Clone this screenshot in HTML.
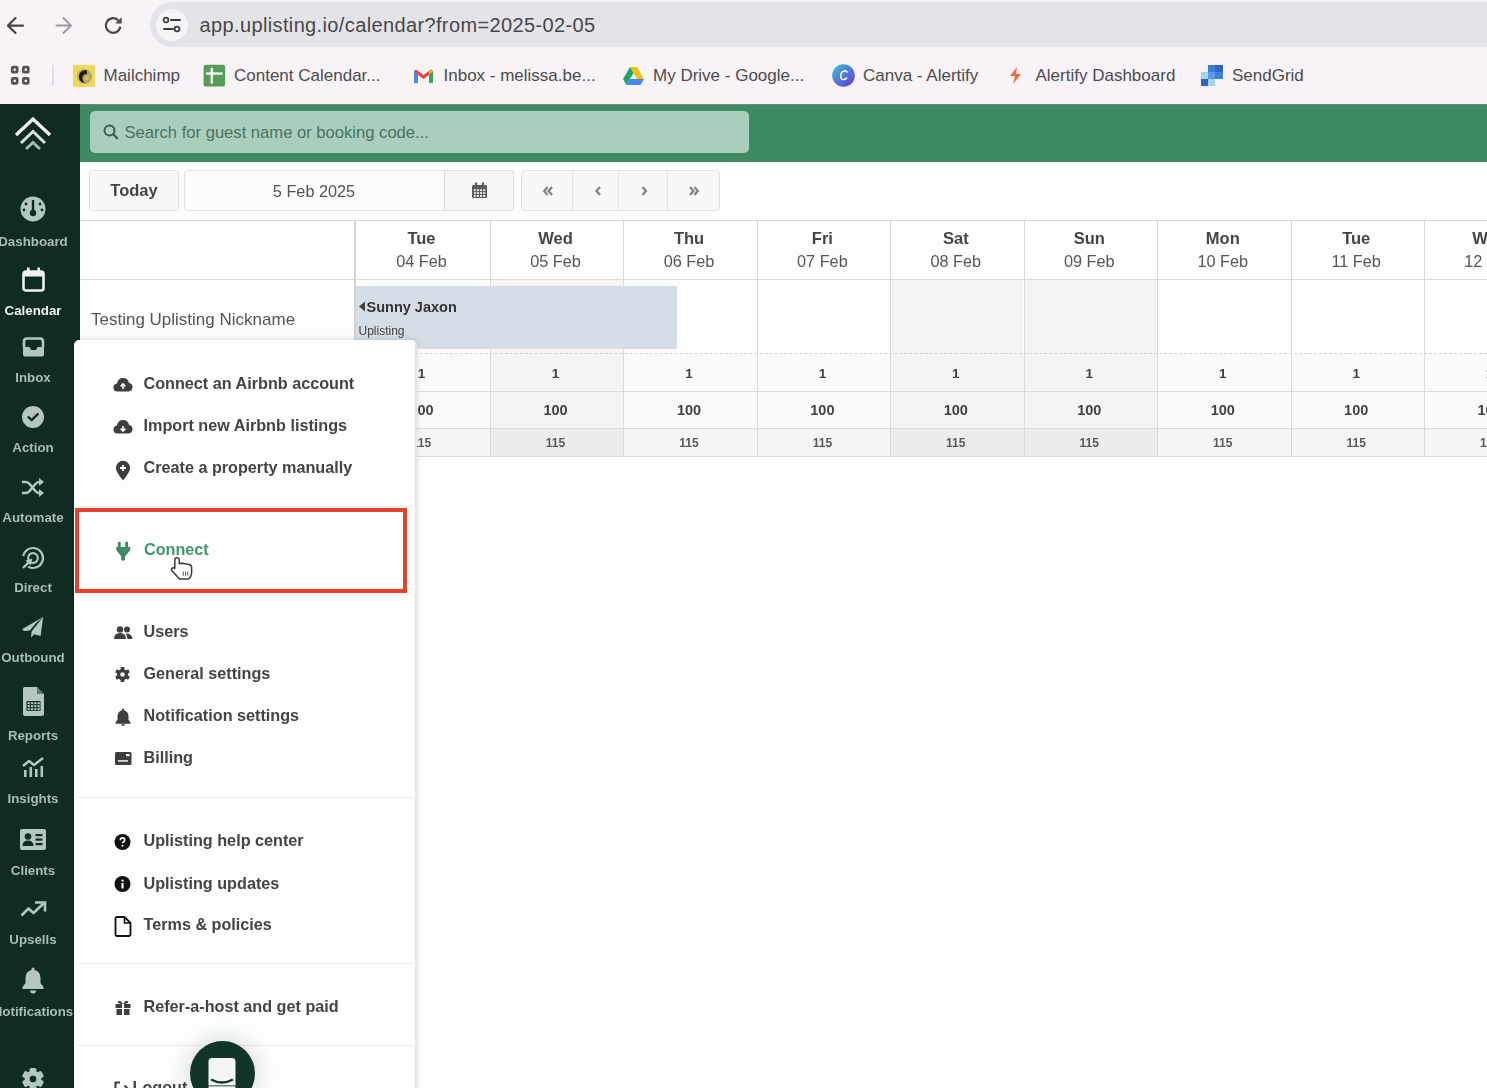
<!DOCTYPE html>
<html><head><meta charset="utf-8">
<style>
*{box-sizing:border-box;margin:0;padding:0}
html,body{width:1487px;height:1088px;overflow:hidden;background:#fdfdfd;font-family:"Liberation Sans", sans-serif;position:relative}
.a{position:absolute}
.t{position:absolute;white-space:nowrap;line-height:1}
svg{overflow:visible}
</style></head><body>

<div id="root" style="position:absolute;left:0;top:0;width:1487px;height:1088px;overflow:hidden;filter:blur(0.35px)">
<div class="a" style="left:0px;top:0px;width:1487px;height:104px;background:#f7f3f7"></div>
<div class="a" style="left:150px;top:2px;width:1400px;height:45px;background:#e4e3e8;border-radius:23px"></div>
<div class="a" style="left:156px;top:9px;width:32px;height:32px;background:#f6f4f7;border-radius:50%"></div>
<svg class="a" style="left:5px;top:15px" width="22" height="20" viewBox="0 0 22 20"><path d="M18 10.6H3M10.5 3L3 10.6l7.5 7.4" fill="none" stroke="#48484a" stroke-width="2.2" stroke-linecap="round" stroke-linejoin="round"/></svg>
<svg class="a" style="left:54px;top:15px" width="22" height="20" viewBox="0 0 22 20"><path d="M2.5 10.6h14.5M9.5 3l7.5 7.6-7.5 7.4" fill="none" stroke="#9a999d" stroke-width="2" stroke-linecap="round" stroke-linejoin="round"/></svg>
<svg class="a" style="left:103px;top:15px" width="22" height="20" viewBox="0 0 22 20"><path d="M17.3 11.8A7.3 7.3 0 1 1 15.26 5.34" fill="none" stroke="#48484a" stroke-width="2.3"/><path d="M12.3 8.6L18.6 2.3V8.6z" fill="#48484a"/></svg>
<svg class="a" style="left:162px;top:16px" width="20" height="18" viewBox="0 0 20 18"><circle cx="4" cy="4" r="2.4" fill="none" stroke="#3c3c3e" stroke-width="1.8"/><path d="M9 4h9" stroke="#3c3c3e" stroke-width="2" stroke-linecap="round"/><circle cx="15" cy="13" r="2.4" fill="none" stroke="#3c3c3e" stroke-width="1.8"/><path d="M2 13h9" stroke="#3c3c3e" stroke-width="2" stroke-linecap="round"/></svg>
<div class="t" style="left:199.5px;top:15.1px;font-size:20px;font-weight:normal;color:#48484a;letter-spacing:0.37px">app.uplisting.io/calendar?from=2025-02-05</div>
<svg class="a" style="left:11px;top:66px" width="20" height="20" viewBox="0 0 20 20"><rect x="1.2" y="1.2" width="5" height="5" rx="0.8" fill="none" stroke="#555557" stroke-width="2.7"/><rect x="1.2" y="12.3" width="5" height="5" rx="0.8" fill="none" stroke="#555557" stroke-width="2.7"/><rect x="12.3" y="1.2" width="5" height="5" rx="0.8" fill="none" stroke="#555557" stroke-width="2.7"/><rect x="12.3" y="12.3" width="5" height="5" rx="0.8" fill="none" stroke="#555557" stroke-width="2.7"/></svg>
<div class="a" style="left:52px;top:65px;width:2px;height:21px;background:#dce0ea"></div>
<div class="a" style="left:73px;top:65px;width:22px;height:22px;background:#f0d65a"></div>
<svg class="a" style="left:73px;top:65px" width="22" height="22" viewBox="0 0 22 22"><circle cx="11.5" cy="11.5" r="7.5" fill="#b9a86a"/><path d="M14 5.5c-4-1-8 1.5-8 6s3 6.5 6 6c-2-1-3-3-2.5-5.5 0.5-2 2-3 4.5-3z" fill="#1b1d1a"/><circle cx="14" cy="13" r="2" fill="#e0c060"/></svg>
<div class="t" style="left:103.5px;top:66.6px;font-size:17px;font-weight:normal;color:#4c4c4e;">Mailchimp</div>
<svg class="a" style="left:203px;top:64px" width="23" height="23" viewBox="0 0 23 23"><rect x="0.6" y="0.7" width="21.5" height="21.7" rx="2.2" fill="#559c55"/><rect x="3" y="8.4" width="16.5" height="2.3" fill="#fff"/><rect x="7.6" y="3.8" width="2.3" height="16" rx="1" fill="#fff"/></svg>
<div class="t" style="left:234.0px;top:66.6px;font-size:17px;font-weight:normal;color:#4c4c4e;">Content Calendar...</div>
<svg class="a" style="left:413px;top:68px" width="21" height="16" viewBox="0 0 21 16"><path d="M1 3v12h4V7l5.5 4L16 7v8h4V3l-2-1.5-7.5 5.5L3 1.5z" fill="#e8453c"/><path d="M1 3v12h4V7z" fill="#4a84f0"/><path d="M16 7v8h4V3z" fill="#36a852"/><path d="M20 3l-4 4V2z" fill="#f5bb13"/></svg>
<div class="t" style="left:443.5px;top:66.6px;font-size:17px;font-weight:normal;color:#4c4c4e;">Inbox - melissa.be...</div>
<svg class="a" style="left:623px;top:66px" width="21" height="19" viewBox="0 0 21 19"><path d="M7 1h7l7 12h-7z" fill="#f8bc14"/><path d="M7 1l-7 12 3.5 6 7-12z" fill="#1fa463"/><path d="M3.5 19h14l3.5-6H7z" fill="#4688f1"/></svg>
<div class="t" style="left:653.0px;top:66.6px;font-size:17px;font-weight:normal;color:#4c4c4e;">My Drive - Google...</div>
<svg class="a" style="left:832px;top:64px" width="23" height="23" viewBox="0 0 23 23"><defs><linearGradient id="cg" x1="0" y1="0" x2="1" y2="1"><stop offset="0" stop-color="#35c3d8"/><stop offset="1" stop-color="#6a34d6"/></linearGradient></defs><circle cx="11.5" cy="11.5" r="11.3" fill="url(#cg)"/><path d="M15 8c-1-2-5-1.5-6 2s0 6 3 5.5c1.2-.2 2-.8 2.6-1.4" fill="none" stroke="#fff" stroke-width="1.6" stroke-linecap="round"/></svg>
<div class="t" style="left:863.0px;top:66.6px;font-size:17px;font-weight:normal;color:#4c4c4e;">Canva - Alertify</div>
<svg class="a" style="left:1009px;top:67px" width="13" height="17" viewBox="0 0 13 17"><path d="M8 0L1 9h5l-2 8 8-10H7z" fill="#f06a35"/></svg>
<div class="t" style="left:1035.5px;top:66.6px;font-size:17px;font-weight:normal;color:#4c4c4e;">Alertify Dashboard</div>
<svg class="a" style="left:1200px;top:65px" width="24" height="22" viewBox="0 0 24 22"><rect x="8" y="0" width="15" height="14" fill="#3f7fdb"/><rect x="15" y="0" width="8" height="7" fill="#2b64c6"/><rect x="1" y="7" width="14" height="14" fill="#9fd4f0"/><rect x="1" y="14" width="7" height="7" fill="#2d63c4"/><rect x="8" y="7" width="7" height="7" fill="#5a9be6"/></svg>
<div class="t" style="left:1232.0px;top:66.6px;font-size:17px;font-weight:normal;color:#4c4c4e;">SendGrid</div>
<div class="a" style="left:0px;top:104px;width:80px;height:984px;background:#0f2b22"></div>
<div class="a" style="left:80px;top:104px;width:1407px;height:58px;background:#3e8b63"></div>
<div class="a" style="left:80px;top:104px;width:1407px;height:1px;background:#74877c"></div>
<div class="a" style="left:90px;top:111px;width:659px;height:42px;background:#a9cebb;border-radius:5px"></div>
<svg class="a" style="left:103px;top:124px" width="16" height="16" viewBox="0 0 16 16"><circle cx="6.5" cy="6.5" r="5" fill="none" stroke="#375e4b" stroke-width="2"/><path d="M10.2 10.2l4 4" stroke="#375e4b" stroke-width="2.2" stroke-linecap="round"/></svg>
<div class="t" style="left:124.5px;top:124.5px;font-size:16.6px;font-weight:normal;color:#4a725f;">Search for guest name or booking code...</div>
<div class="a" style="left:89px;top:170px;width:90px;height:41px;background:#f8f8f8;border:1px solid #e0e0e0;border-radius:3px"></div>
<div class="t" style="left:89.0px;top:182.0px;width:90px;text-align:center;font-size:16.5px;font-weight:bold;color:#444444;">Today</div>
<div class="a" style="left:184px;top:170px;width:330px;height:41px;background:#fcfcfc;border:1px solid #e0e0e0;border-radius:3px"></div>
<div class="a" style="left:444px;top:170px;width:70px;height:41px;background:#f6f6f6;border:1px solid #e0e0e0;border-left:1px solid #dcdcdc;border-radius:0 3px 3px 0"></div>
<div class="t" style="left:184.0px;top:183.2px;width:260px;text-align:center;font-size:16.3px;font-weight:normal;color:#555555;">5 Feb 2025</div>
<svg class="a" style="left:471px;top:182px" width="17" height="17" viewBox="0 0 17 17"><rect x="1" y="3" width="15" height="13" rx="1.5" fill="#5a5a5a"/><rect x="4" y="0.5" width="2.2" height="4" fill="#5a5a5a"/><rect x="10.8" y="0.5" width="2.2" height="4" fill="#5a5a5a"/><rect x="2.8" y="7.2" width="2.1" height="1.9" fill="#e6e6e6"/><rect x="2.8" y="10.1" width="2.1" height="1.9" fill="#e6e6e6"/><rect x="2.8" y="13.0" width="2.1" height="1.9" fill="#e6e6e6"/><rect x="5.9" y="7.2" width="2.1" height="1.9" fill="#e6e6e6"/><rect x="5.9" y="10.1" width="2.1" height="1.9" fill="#e6e6e6"/><rect x="5.9" y="13.0" width="2.1" height="1.9" fill="#e6e6e6"/><rect x="9.0" y="7.2" width="2.1" height="1.9" fill="#e6e6e6"/><rect x="9.0" y="10.1" width="2.1" height="1.9" fill="#e6e6e6"/><rect x="9.0" y="13.0" width="2.1" height="1.9" fill="#e6e6e6"/><rect x="12.100000000000001" y="7.2" width="2.1" height="1.9" fill="#e6e6e6"/><rect x="12.100000000000001" y="10.1" width="2.1" height="1.9" fill="#e6e6e6"/><rect x="12.100000000000001" y="13.0" width="2.1" height="1.9" fill="#e6e6e6"/></svg>
<div class="a" style="left:521px;top:170px;width:199px;height:41px;background:#f8f8f8;border:1px solid #e2e2e2;border-radius:4px"></div>
<div class="a" style="left:572px;top:171px;width:1px;height:39px;background:#e3e3e3"></div>
<div class="a" style="left:618px;top:171px;width:1px;height:39px;background:#e3e3e3"></div>
<div class="a" style="left:667px;top:171px;width:1px;height:39px;background:#e3e3e3"></div>
<svg class="a" style="left:542.5px;top:185.5px" width="10" height="10" viewBox="0 0 10 10"><path d="M4.6 1L1.2 5l3.4 4M9 1L5.6 5 9 9" fill="none" stroke="#858585" stroke-width="2.3"/></svg>
<svg class="a" style="left:594.5px;top:185.5px" width="7" height="10" viewBox="0 0 7 10"><path d="M5 1L1.5 5 5 9" fill="none" stroke="#858585" stroke-width="2.3"/></svg>
<svg class="a" style="left:640.5px;top:185.5px" width="7" height="10" viewBox="0 0 7 10"><path d="M1.5 1L5 5 1.5 9" fill="none" stroke="#858585" stroke-width="2.3"/></svg>
<svg class="a" style="left:688.5px;top:185.5px" width="10" height="10" viewBox="0 0 10 10"><path d="M1 1l3.4 4L1 9M5.4 1l3.4 4-3.4 4" fill="none" stroke="#858585" stroke-width="2.3"/></svg>
<div class="a" style="left:80px;top:220px;width:1407px;height:1px;background:#dadada"></div>
<div class="a" style="left:80px;top:279px;width:1407px;height:1px;background:#dadada"></div>
<div class="a" style="left:891px;top:280px;width:132px;height:74px;background:#f4f4f4"></div>
<div class="a" style="left:1025px;top:280px;width:132px;height:74px;background:#f4f4f4"></div>
<div class="a" style="left:491px;top:280px;width:132px;height:74px;background:#f8f4ef"></div>
<div class="a" style="left:356px;top:354px;width:135px;height:74px;background:#fbfafa"></div>
<div class="a" style="left:356px;top:428px;width:135px;height:28px;background:#f7f4f4"></div>
<div class="a" style="left:491px;top:354px;width:133px;height:74px;background:#f5f4f4"></div>
<div class="a" style="left:491px;top:428px;width:133px;height:28px;background:#eeebeb"></div>
<div class="a" style="left:624px;top:354px;width:133px;height:74px;background:#fbfafa"></div>
<div class="a" style="left:624px;top:428px;width:133px;height:28px;background:#f7f4f4"></div>
<div class="a" style="left:758px;top:354px;width:133px;height:74px;background:#fbfafa"></div>
<div class="a" style="left:758px;top:428px;width:133px;height:28px;background:#f7f4f4"></div>
<div class="a" style="left:891px;top:354px;width:133px;height:74px;background:#f5f4f4"></div>
<div class="a" style="left:891px;top:428px;width:133px;height:28px;background:#eeebeb"></div>
<div class="a" style="left:1025px;top:354px;width:133px;height:74px;background:#f5f4f4"></div>
<div class="a" style="left:1025px;top:428px;width:133px;height:28px;background:#eeebeb"></div>
<div class="a" style="left:1158px;top:354px;width:133px;height:74px;background:#fbfafa"></div>
<div class="a" style="left:1158px;top:428px;width:133px;height:28px;background:#f7f4f4"></div>
<div class="a" style="left:1292px;top:354px;width:133px;height:74px;background:#fbfafa"></div>
<div class="a" style="left:1292px;top:428px;width:133px;height:28px;background:#f7f4f4"></div>
<div class="a" style="left:1425px;top:354px;width:133px;height:74px;background:#fbfafa"></div>
<div class="a" style="left:1425px;top:428px;width:133px;height:28px;background:#f7f4f4"></div>
<div class="a" style="left:80px;top:353px;width:1407px;height:0;border-top:1px dashed #d4d4d4"></div>
<div class="a" style="left:80px;top:391px;width:1407px;height:1px;background:#dadada"></div>
<div class="a" style="left:80px;top:428px;width:1407px;height:1px;background:#dadada"></div>
<div class="a" style="left:80px;top:456px;width:1407px;height:1px;background:#dadada"></div>
<div class="a" style="left:354px;top:221px;width:2px;height:235px;background:#d2d2d2"></div>
<div class="a" style="left:490px;top:221px;width:1px;height:235px;background:#dadada"></div>
<div class="a" style="left:623px;top:221px;width:1px;height:235px;background:#dadada"></div>
<div class="a" style="left:757px;top:221px;width:1px;height:235px;background:#dadada"></div>
<div class="a" style="left:890px;top:221px;width:1px;height:235px;background:#dadada"></div>
<div class="a" style="left:1024px;top:221px;width:1px;height:235px;background:#dadada"></div>
<div class="a" style="left:1157px;top:221px;width:1px;height:235px;background:#dadada"></div>
<div class="a" style="left:1291px;top:221px;width:1px;height:235px;background:#dadada"></div>
<div class="a" style="left:1424px;top:221px;width:1px;height:235px;background:#dadada"></div>
<div class="t" style="left:354.5px;top:229.5px;width:134px;text-align:center;font-size:16.5px;font-weight:bold;color:#454545;">Tue</div>
<div class="t" style="left:354.5px;top:253.2px;width:134px;text-align:center;font-size:16.3px;font-weight:normal;color:#575757;">04 Feb</div>
<div class="t" style="left:354.5px;top:367.1px;width:134px;text-align:center;font-size:13.5px;font-weight:bold;color:#424242;">1</div>
<div class="t" style="left:354.5px;top:402.7px;width:134px;text-align:center;font-size:14.5px;font-weight:bold;color:#424242;">100</div>
<div class="t" style="left:354.5px;top:437.3px;width:134px;text-align:center;font-size:12px;font-weight:bold;color:#5a5a5a;">115</div>
<div class="t" style="left:489.5px;top:229.5px;width:132px;text-align:center;font-size:16.5px;font-weight:bold;color:#454545;">Wed</div>
<div class="t" style="left:489.5px;top:253.2px;width:132px;text-align:center;font-size:16.3px;font-weight:normal;color:#575757;">05 Feb</div>
<div class="t" style="left:489.5px;top:367.1px;width:132px;text-align:center;font-size:13.5px;font-weight:bold;color:#424242;">1</div>
<div class="t" style="left:489.5px;top:402.7px;width:132px;text-align:center;font-size:14.5px;font-weight:bold;color:#424242;">100</div>
<div class="t" style="left:489.5px;top:437.3px;width:132px;text-align:center;font-size:12px;font-weight:bold;color:#5a5a5a;">115</div>
<div class="t" style="left:623.0px;top:229.5px;width:132px;text-align:center;font-size:16.5px;font-weight:bold;color:#454545;">Thu</div>
<div class="t" style="left:623.0px;top:253.2px;width:132px;text-align:center;font-size:16.3px;font-weight:normal;color:#575757;">06 Feb</div>
<div class="t" style="left:623.0px;top:367.1px;width:132px;text-align:center;font-size:13.5px;font-weight:bold;color:#424242;">1</div>
<div class="t" style="left:623.0px;top:402.7px;width:132px;text-align:center;font-size:14.5px;font-weight:bold;color:#424242;">100</div>
<div class="t" style="left:623.0px;top:437.3px;width:132px;text-align:center;font-size:12px;font-weight:bold;color:#5a5a5a;">115</div>
<div class="t" style="left:756.4px;top:229.5px;width:132px;text-align:center;font-size:16.5px;font-weight:bold;color:#454545;">Fri</div>
<div class="t" style="left:756.4px;top:253.2px;width:132px;text-align:center;font-size:16.3px;font-weight:normal;color:#575757;">07 Feb</div>
<div class="t" style="left:756.4px;top:367.1px;width:132px;text-align:center;font-size:13.5px;font-weight:bold;color:#424242;">1</div>
<div class="t" style="left:756.4px;top:402.7px;width:132px;text-align:center;font-size:14.5px;font-weight:bold;color:#424242;">100</div>
<div class="t" style="left:756.4px;top:437.3px;width:132px;text-align:center;font-size:12px;font-weight:bold;color:#5a5a5a;">115</div>
<div class="t" style="left:889.8px;top:229.5px;width:132px;text-align:center;font-size:16.5px;font-weight:bold;color:#454545;">Sat</div>
<div class="t" style="left:889.8px;top:253.2px;width:132px;text-align:center;font-size:16.3px;font-weight:normal;color:#575757;">08 Feb</div>
<div class="t" style="left:889.8px;top:367.1px;width:132px;text-align:center;font-size:13.5px;font-weight:bold;color:#424242;">1</div>
<div class="t" style="left:889.8px;top:402.7px;width:132px;text-align:center;font-size:14.5px;font-weight:bold;color:#424242;">100</div>
<div class="t" style="left:889.8px;top:437.3px;width:132px;text-align:center;font-size:12px;font-weight:bold;color:#5a5a5a;">115</div>
<div class="t" style="left:1023.3px;top:229.5px;width:132px;text-align:center;font-size:16.5px;font-weight:bold;color:#454545;">Sun</div>
<div class="t" style="left:1023.3px;top:253.2px;width:132px;text-align:center;font-size:16.3px;font-weight:normal;color:#575757;">09 Feb</div>
<div class="t" style="left:1023.3px;top:367.1px;width:132px;text-align:center;font-size:13.5px;font-weight:bold;color:#424242;">1</div>
<div class="t" style="left:1023.3px;top:402.7px;width:132px;text-align:center;font-size:14.5px;font-weight:bold;color:#424242;">100</div>
<div class="t" style="left:1023.3px;top:437.3px;width:132px;text-align:center;font-size:12px;font-weight:bold;color:#5a5a5a;">115</div>
<div class="t" style="left:1156.8px;top:229.5px;width:132px;text-align:center;font-size:16.5px;font-weight:bold;color:#454545;">Mon</div>
<div class="t" style="left:1156.8px;top:253.2px;width:132px;text-align:center;font-size:16.3px;font-weight:normal;color:#575757;">10 Feb</div>
<div class="t" style="left:1156.8px;top:367.1px;width:132px;text-align:center;font-size:13.5px;font-weight:bold;color:#424242;">1</div>
<div class="t" style="left:1156.8px;top:402.7px;width:132px;text-align:center;font-size:14.5px;font-weight:bold;color:#424242;">100</div>
<div class="t" style="left:1156.8px;top:437.3px;width:132px;text-align:center;font-size:12px;font-weight:bold;color:#5a5a5a;">115</div>
<div class="t" style="left:1290.2px;top:229.5px;width:132px;text-align:center;font-size:16.5px;font-weight:bold;color:#454545;">Tue</div>
<div class="t" style="left:1290.2px;top:253.2px;width:132px;text-align:center;font-size:16.3px;font-weight:normal;color:#575757;">11 Feb</div>
<div class="t" style="left:1290.2px;top:367.1px;width:132px;text-align:center;font-size:13.5px;font-weight:bold;color:#424242;">1</div>
<div class="t" style="left:1290.2px;top:402.7px;width:132px;text-align:center;font-size:14.5px;font-weight:bold;color:#424242;">100</div>
<div class="t" style="left:1290.2px;top:437.3px;width:132px;text-align:center;font-size:12px;font-weight:bold;color:#5a5a5a;">115</div>
<div class="t" style="left:1423.6px;top:229.5px;width:132px;text-align:center;font-size:16.5px;font-weight:bold;color:#454545;">Wed</div>
<div class="t" style="left:1423.6px;top:253.2px;width:132px;text-align:center;font-size:16.3px;font-weight:normal;color:#575757;">12 Feb</div>
<div class="t" style="left:1423.6px;top:367.1px;width:132px;text-align:center;font-size:13.5px;font-weight:bold;color:#424242;">1</div>
<div class="t" style="left:1423.6px;top:402.7px;width:132px;text-align:center;font-size:14.5px;font-weight:bold;color:#424242;">100</div>
<div class="t" style="left:1423.6px;top:437.3px;width:132px;text-align:center;font-size:12px;font-weight:bold;color:#5a5a5a;">115</div>
<div class="t" style="left:91.0px;top:310.6px;font-size:17px;font-weight:normal;color:#555555;">Testing Uplisting Nickname</div>
<div class="a" style="left:356px;top:286px;width:321px;height:63px;background:#d5dee7"></div>
<svg class="a" style="left:358px;top:301px" width="8" height="11" viewBox="0 0 8 11"><path d="M7 0.5L1 5.5l6 5z" fill="#404040"/></svg>
<div class="t" style="left:366.5px;top:299.5px;font-size:14.5px;font-weight:bold;color:#333333;">Sunny Jaxon</div>
<div class="t" style="left:358.5px;top:324.8px;font-size:12px;font-weight:normal;color:#444444;">Uplisting</div>
<svg class="a" style="left:13px;top:115px" width="40" height="36" viewBox="0 0 40 36"><path d="M3 20L20 4l17 16" fill="none" stroke="#f2f5f3" stroke-width="3.3"/><path d="M8 28L20 16.5 32 28" fill="none" stroke="#d9e3de" stroke-width="3"/><path d="M13 34l7-6.5 7 6.5" fill="none" stroke="#a8bcb3" stroke-width="2.8"/></svg>
<div class="t" style="left:-17.0px;top:234.7px;width:100px;text-align:center;font-size:13.3px;font-weight:bold;color:#a8bdb3;">Dashboard</div>
<div class="t" style="left:-17.0px;top:303.8px;width:100px;text-align:center;font-size:13.3px;font-weight:bold;color:#eef2f0;">Calendar</div>
<div class="t" style="left:-17.0px;top:370.9px;width:100px;text-align:center;font-size:13.3px;font-weight:bold;color:#a8bdb3;">Inbox</div>
<div class="t" style="left:-17.0px;top:440.8px;width:100px;text-align:center;font-size:13.3px;font-weight:bold;color:#a8bdb3;">Action</div>
<div class="t" style="left:-17.0px;top:510.8px;width:100px;text-align:center;font-size:13.3px;font-weight:bold;color:#a8bdb3;">Automate</div>
<div class="t" style="left:-17.0px;top:581.2px;width:100px;text-align:center;font-size:13.3px;font-weight:bold;color:#a8bdb3;">Direct</div>
<div class="t" style="left:-17.0px;top:651.2px;width:100px;text-align:center;font-size:13.3px;font-weight:bold;color:#a8bdb3;">Outbound</div>
<div class="t" style="left:-17.0px;top:729.2px;width:100px;text-align:center;font-size:13.3px;font-weight:bold;color:#a8bdb3;">Reports</div>
<div class="t" style="left:-17.0px;top:791.8px;width:100px;text-align:center;font-size:13.3px;font-weight:bold;color:#a8bdb3;">Insights</div>
<div class="t" style="left:-17.0px;top:864.2px;width:100px;text-align:center;font-size:13.3px;font-weight:bold;color:#a8bdb3;">Clients</div>
<div class="t" style="left:-17.0px;top:933.2px;width:100px;text-align:center;font-size:13.3px;font-weight:bold;color:#a8bdb3;">Upsells</div>
<div class="t" style="left:-17.0px;top:1005.2px;width:100px;text-align:center;font-size:13.3px;font-weight:bold;color:#a8bdb3;">Notifications</div>
<svg class="a" style="left:20px;top:196px" width="26" height="26" viewBox="0 0 26 26"><circle cx="13" cy="13" r="12.5" fill="#b3c7be"/><path d="M13 4v11" stroke="#0f2b22" stroke-width="2.4"/><circle cx="13" cy="17" r="3.2" fill="#0f2b22"/><circle cx="6" cy="8" r="1.4" fill="#0f2b22"/><circle cx="20" cy="8" r="1.4" fill="#0f2b22"/><circle cx="4" cy="14" r="1.4" fill="#0f2b22"/><circle cx="22" cy="14" r="1.4" fill="#0f2b22"/></svg>
<svg class="a" style="left:22px;top:267px" width="23" height="25" viewBox="0 0 23 25"><rect x="1.5" y="4.5" width="20" height="19" rx="2.5" fill="none" stroke="#eef2f0" stroke-width="2.6"/><rect x="1.5" y="4.5" width="20" height="5" fill="#eef2f0"/><rect x="5" y="0.5" width="2.6" height="5" fill="#eef2f0"/><rect x="15.4" y="0.5" width="2.6" height="5" fill="#eef2f0"/></svg>
<svg class="a" style="left:22px;top:337px" width="23" height="20" viewBox="0 0 23 20"><path d="M2 10V4.5Q2 1.5 5 1.5h13q3 0 3 3V10" fill="none" stroke="#b3c7be" stroke-width="2.6"/><path d="M1 10h6.5l1.5 3h5l1.5-3H22v7.5q0 2-2 2H3q-2 0-2-2z" fill="#b3c7be"/></svg>
<svg class="a" style="left:22px;top:406px" width="22" height="22" viewBox="0 0 22 22"><circle cx="11" cy="11" r="11" fill="#b3c7be"/><path d="M6.5 11.2l3.2 3 6-6" fill="none" stroke="#0f2b22" stroke-width="2.4" stroke-linecap="round" stroke-linejoin="round"/></svg>
<svg class="a" style="left:21px;top:478px" width="24" height="19" viewBox="0 0 24 19"><path d="M1 4h4c5 0 8 11 13 11h2M1 15h4c5 0 8-11 13-11h2" fill="none" stroke="#b3c7be" stroke-width="2.6"/><path d="M18 0l5 4-5 4zM18 11l5 4-5 4z" fill="#b3c7be"/></svg>
<svg class="a" style="left:21px;top:547px" width="24" height="24" viewBox="0 0 24 24"><circle cx="12" cy="11" r="10" fill="none" stroke="#b3c7be" stroke-width="2.2" stroke-dasharray="50 12.8" transform="rotate(192 12 11)"/><circle cx="12" cy="11" r="4.8" fill="none" stroke="#b3c7be" stroke-width="2.2"/><path d="M9 14L2 21" stroke="#b3c7be" stroke-width="2.4"/><path d="M11.5 11.5L4.5 13.5 9.5 18.5z" fill="#b3c7be"/></svg>
<svg class="a" style="left:21px;top:615px" width="23" height="24" viewBox="0 0 23 24"><path d="M22.2 1.8L19.6 21 13.3 19.2 10 22.6 10.6 16.6 16.8 8.4z" fill="#b3c7be"/><path d="M22 2L1 14.2 3 15.9 8.9 15.4 15.3 7.8z" fill="#b3c7be"/></svg>
<svg class="a" style="left:23px;top:687px" width="21" height="29" viewBox="0 0 21 29"><path d="M0 2q0-2 2-2h12l7 7v20q0 2-2 2H2q-2 0-2-2z" fill="#b3c7be"/><path d="M14 0v7h7" fill="#0f2b22" opacity="0.5"/><rect x="3.5" y="14" width="14" height="10" fill="#0f2b22"/><rect x="4.6" y="15.2" width="2.3" height="2" fill="#b3c7be"/><rect x="4.6" y="18.2" width="2.3" height="2" fill="#b3c7be"/><rect x="4.6" y="21.2" width="2.3" height="2" fill="#b3c7be"/><rect x="7.8999999999999995" y="15.2" width="2.3" height="2" fill="#b3c7be"/><rect x="7.8999999999999995" y="18.2" width="2.3" height="2" fill="#b3c7be"/><rect x="7.8999999999999995" y="21.2" width="2.3" height="2" fill="#b3c7be"/><rect x="11.2" y="15.2" width="2.3" height="2" fill="#b3c7be"/><rect x="11.2" y="18.2" width="2.3" height="2" fill="#b3c7be"/><rect x="11.2" y="21.2" width="2.3" height="2" fill="#b3c7be"/><rect x="14.499999999999998" y="15.2" width="2.3" height="2" fill="#b3c7be"/><rect x="14.499999999999998" y="18.2" width="2.3" height="2" fill="#b3c7be"/><rect x="14.499999999999998" y="21.2" width="2.3" height="2" fill="#b3c7be"/></svg>
<svg class="a" style="left:22px;top:757px" width="22" height="21" viewBox="0 0 22 21"><path d="M1 9l6-5 5 4 9-7" fill="none" stroke="#b3c7be" stroke-width="2.4" stroke-linejoin="round"/><rect x="2" y="13" width="2.6" height="7" fill="#b3c7be"/><rect x="7.5" y="10" width="2.6" height="10" fill="#b3c7be"/><rect x="13" y="12" width="2.6" height="8" fill="#b3c7be"/><rect x="18.5" y="9" width="2.6" height="11" fill="#b3c7be"/></svg>
<svg class="a" style="left:20px;top:829px" width="26" height="21" viewBox="0 0 26 21"><rect x="0" y="0" width="26" height="21" rx="2" fill="#b3c7be"/><circle cx="8" cy="7.5" r="3.3" fill="#0f2b22"/><path d="M2.5 17q0-5.5 5.5-5.5t5.5 5.5z" fill="#0f2b22"/><rect x="15.5" y="5" width="7" height="2.2" fill="#0f2b22"/><rect x="15.5" y="9.5" width="7" height="2.2" fill="#0f2b22"/><rect x="15.5" y="14" width="7" height="2.2" fill="#0f2b22"/></svg>
<svg class="a" style="left:20px;top:901px" width="26" height="16" viewBox="0 0 26 16"><path d="M1.5 14.5l7-7 5 4.5 10-9.5" fill="none" stroke="#b3c7be" stroke-width="2.6" stroke-linejoin="round"/><path d="M15 1.5h10v9" fill="none" stroke="#b3c7be" stroke-width="2.6"/></svg>
<svg class="a" style="left:21px;top:966px" width="24" height="28" viewBox="0 0 24 28"><path d="M12 1.5q1.5 0 1.5 1.5v1q6 1.5 6 8v5l3 4v2h-21v-2l3-4v-5q0-6.5 6-8v-1q0-1.5 1.5-1.5z" fill="#b3c7be"/><path d="M9 24.5h6q0 3-3 3t-3-3z" fill="#b3c7be"/></svg>
<svg class="a" style="left:20px;top:1065.5px" width="26" height="26" viewBox="0 0 26 26"><g transform="translate(13 13)"><g fill="#b3c7be"><rect x="-3.4" y="-11" width="6.8" height="6" rx="1.5" transform="rotate(0)"/><rect x="-3.4" y="-11" width="6.8" height="6" rx="1.5" transform="rotate(60)"/><rect x="-3.4" y="-11" width="6.8" height="6" rx="1.5" transform="rotate(120)"/><rect x="-3.4" y="-11" width="6.8" height="6" rx="1.5" transform="rotate(180)"/><rect x="-3.4" y="-11" width="6.8" height="6" rx="1.5" transform="rotate(240)"/><rect x="-3.4" y="-11" width="6.8" height="6" rx="1.5" transform="rotate(300)"/><circle r="8.3"/></g><circle r="3.3" fill="#0f2b22"/></g></svg>
<div class="a" style="left:74px;top:340px;width:343px;height:760px;background:#fdfdfd;box-shadow:0 -1px 5px rgba(0,0,0,0.13);border-right:2px solid #e6e6e6;border-radius:5px 5px 0 0"></div>
<div class="t" style="left:143.5px;top:375.3px;font-size:16.2px;font-weight:bold;color:#444446;">Connect an Airbnb account</div>
<div class="t" style="left:143.5px;top:417.4px;font-size:16.2px;font-weight:bold;color:#444446;">Import new Airbnb listings</div>
<div class="t" style="left:143.5px;top:459.3px;font-size:16.2px;font-weight:bold;color:#444446;">Create a property manually</div>
<div class="t" style="left:143.5px;top:622.8px;font-size:16.2px;font-weight:bold;color:#444446;">Users</div>
<div class="t" style="left:143.5px;top:665.1px;font-size:16.2px;font-weight:bold;color:#444446;">General settings</div>
<div class="t" style="left:143.5px;top:707.3px;font-size:16.2px;font-weight:bold;color:#444446;">Notification settings</div>
<div class="t" style="left:143.5px;top:749.2px;font-size:16.2px;font-weight:bold;color:#444446;">Billing</div>
<div class="t" style="left:143.5px;top:832.4px;font-size:16.2px;font-weight:bold;color:#444446;">Uplisting help center</div>
<div class="t" style="left:143.5px;top:874.5px;font-size:16.2px;font-weight:bold;color:#444446;">Uplisting updates</div>
<div class="t" style="left:143.5px;top:916.3px;font-size:16.2px;font-weight:bold;color:#444446;">Terms &amp; policies</div>
<div class="t" style="left:143.5px;top:998.3px;font-size:16.2px;font-weight:bold;color:#444446;">Refer-a-host and get paid</div>
<svg class="a" style="left:113px;top:376.5px" width="20" height="15" viewBox="0 0 20 15"><path d="M4.5 14.5q-4 0-4-4 0-3.5 3.5-4Q5 1 10 1q5 0 6 5 3.5.5 3.5 4 0 4-4 4.5z" fill="#3e3e40"/><path d="M10 12V7M7.6 9.4L10 7l2.4 2.4" fill="none" stroke="#fdfdfd" stroke-width="1.6"/></svg>
<svg class="a" style="left:113px;top:418.59999999999997px" width="20" height="15" viewBox="0 0 20 15"><path d="M4.5 14.5q-4 0-4-4 0-3.5 3.5-4Q5 1 10 1q5 0 6 5 3.5.5 3.5 4 0 4-4 4.5z" fill="#3e3e40"/><path d="M10 7v5M7.6 9.6L10 12l2.4-2.4" fill="none" stroke="#fdfdfd" stroke-width="1.6"/></svg>
<svg class="a" style="left:115px;top:459.5px" width="16" height="21" viewBox="0 0 16 21"><path d="M8 20.5Q1 12 .8 8A7.2 7.2 0 0 1 15.2 8Q15 12 8 20.5z" fill="#3e3e40"/><path d="M8 5v6M5 8h6" stroke="#fdfdfd" stroke-width="1.8"/></svg>
<svg class="a" style="left:114px;top:626.0px" width="19" height="14" viewBox="0 0 19 14"><circle cx="6" cy="3.5" r="3.2" fill="#3e3e40"/><circle cx="13" cy="3.5" r="3" fill="#3e3e40"/><path d="M0 13q0-6 6-6t6 6z" fill="#3e3e40"/><path d="M12 7.5q6 0 6.5 5.5h-5z" fill="#3e3e40"/></svg>
<svg class="a" style="left:115px;top:666.8000000000001px" width="15" height="15" viewBox="0 0 15 15"><g transform="translate(7.5 7.5)"><g fill="#3e3e40"><rect x="-1.8" y="-7.5" width="3.6" height="4" transform="rotate(0)"/><rect x="-1.8" y="-7.5" width="3.6" height="4" transform="rotate(60)"/><rect x="-1.8" y="-7.5" width="3.6" height="4" transform="rotate(120)"/><rect x="-1.8" y="-7.5" width="3.6" height="4" transform="rotate(180)"/><rect x="-1.8" y="-7.5" width="3.6" height="4" transform="rotate(240)"/><rect x="-1.8" y="-7.5" width="3.6" height="4" transform="rotate(300)"/><circle r="5.5"/></g><circle r="2.2" fill="#fdfdfd"/></g></svg>
<svg class="a" style="left:115px;top:708.0px" width="16" height="18" viewBox="0 0 16 18"><path d="M8 0.5q1 0 1 1v.8q4 1 4.5 5.5v4l2 2.7v1.3H.5v-1.3l2-2.7v-4Q3 3.3 7 2.3v-.8q0-1 1-1z" fill="#3e3e40"/><path d="M6 16.3h4q0 1.7-2 1.7t-2-1.7z" fill="#3e3e40"/></svg>
<svg class="a" style="left:114.5px;top:752.4000000000001px" width="17" height="14" viewBox="0 0 17 14"><rect x="0" y="0" width="16.5" height="13" rx="1.5" fill="#3e3e40"/><rect x="11" y="2" width="3.5" height="2.2" fill="#fdfdfd"/><rect x="3" y="8" width="10" height="1.8" fill="#fdfdfd" opacity="0.8"/></svg>
<svg class="a" style="left:114px;top:833.6px" width="17" height="16" viewBox="0 0 17 16"><circle cx="8.5" cy="8" r="8" fill="#111"/><path d="M6.3 6.2q0-2.3 2.2-2.3t2.2 2.1q0 1.3-1.3 1.9-.9.5-.9 1.4" fill="none" stroke="#fdfdfd" stroke-width="1.6"/><circle cx="8.5" cy="11.8" r="1" fill="#fdfdfd"/></svg>
<svg class="a" style="left:114px;top:875.7px" width="17" height="16" viewBox="0 0 17 16"><circle cx="8.5" cy="8" r="8" fill="#111"/><circle cx="8.5" cy="4.6" r="1.2" fill="#fdfdfd"/><path d="M8.5 7v5.5" stroke="#fdfdfd" stroke-width="2.2"/></svg>
<svg class="a" style="left:114px;top:915.5px" width="18" height="21" viewBox="0 0 18 21"><path d="M1.5 2.5q0-1.5 1.5-1.5h7.5l6 6v11.5q0 1.5-1.5 1.5H3q-1.5 0-1.5-1.5z" fill="none" stroke="#111" stroke-width="1.8" stroke-linejoin="round"/><path d="M10.5 1v6h6" fill="none" stroke="#111" stroke-width="1.6"/></svg>
<svg class="a" style="left:115px;top:1000.0px" width="16" height="15" viewBox="0 0 16 15"><rect x="0.5" y="4" width="15" height="4" fill="#3e3e40"/><rect x="1.5" y="9" width="13" height="6" fill="#3e3e40"/><rect x="7" y="4" width="2" height="11" fill="#fdfdfd"/><path d="M8 4Q5 -1 3 1.5 2 3.5 8 4 14 3.5 13 1.5 11 -1 8 4z" fill="#3e3e40"/></svg>
<svg class="a" style="left:116px;top:541px" width="15" height="20" viewBox="0 0 15 20"><rect x="1.8" y="0.8" width="2.9" height="5.6" rx="1" fill="#3d8a63"/><rect x="9.1" y="0.8" width="3" height="5.6" rx="1" fill="#3d8a63"/><path d="M0 6h14.4l-.5 3.5L9 15.6H5.4L.5 9.5z" fill="#3d8a63"/><rect x="5.2" y="14" width="3.8" height="5.6" rx="1.2" fill="#3d8a63"/></svg>
<div class="t" style="left:144.0px;top:541.0px;font-size:16.2px;font-weight:bold;color:#3f9a6b;">Connect</div>
<div class="a" style="left:77px;top:506px;width:336px;height:1px;background:#ececec"></div>
<div class="a" style="left:77px;top:588px;width:336px;height:1px;background:#ececec"></div>
<div class="a" style="left:77px;top:797px;width:336px;height:1px;background:#ececec"></div>
<div class="a" style="left:77px;top:963px;width:336px;height:1px;background:#ececec"></div>
<div class="a" style="left:77px;top:1045px;width:336px;height:1px;background:#ececec"></div>
<svg class="a" style="left:114px;top:1081px" width="16" height="16" viewBox="0 0 16 16"><path d="M6 1.5H1.5v13H6" fill="none" stroke="#3e3e40" stroke-width="2"/><path d="M4.5 8h9M10.5 4.5L14 8l-3.5 3.5" fill="none" stroke="#3e3e40" stroke-width="2"/></svg>
<div class="t" style="left:132.5px;top:1079.3px;font-size:16.2px;font-weight:bold;color:#444446;">Logout</div>
<div class="a" style="left:75px;top:508px;width:332px;height:85px;border:4px solid #e2432b"></div>
<svg class="a" style="left:169px;top:555.5px" width="25" height="25" viewBox="0 0 25 25"><path d="M5.8 12.5V3.8Q5.8 1.8 8 1.8T10.2 3.8V7.6L13 7.2 16 7.8 19 8.3Q22.3 8.6 22.6 11V17Q22.3 20.5 19.8 23H10.5L2.8 14.5Q2 12.6 3.5 12Q5 11.5 5.8 12.5Z" fill="#fff" stroke="#3a3a3a" stroke-width="1.5" stroke-linejoin="round"/><path d="M14.3 15.5v4.2M16.5 15.5v4.2M18.7 15.5v4.2" stroke="#555" stroke-width="1"/></svg>
<div class="a" style="left:190px;top:1041px;width:65px;height:65px;border-radius:50%;background:#12352a;box-shadow:0 0 18px 6px rgba(0,0,0,0.10)"></div>
<svg class="a" style="left:208px;top:1058px" width="28" height="40" viewBox="0 0 28 40"><rect x="0.5" y="0" width="27" height="34" rx="3.5" fill="#f4f6f5"/><path d="M3 21.5q11 6 22 0" fill="none" stroke="#12352a" stroke-width="2.4"/><rect x="0" y="27" width="28" height="1.5" fill="#12352a" opacity="0.6"/></svg>
</div></body></html>
